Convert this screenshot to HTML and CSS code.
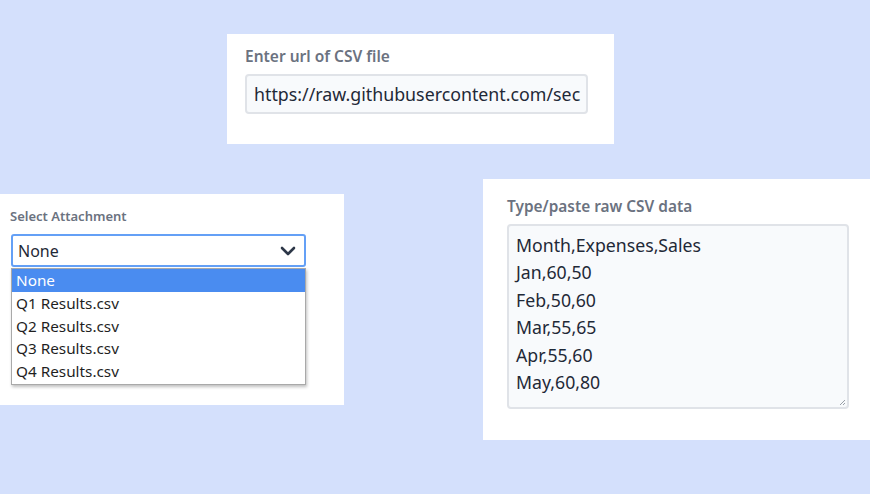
FILE: index.html
```html
<!DOCTYPE html>
<html lang="en">
<head>
<meta charset="utf-8">
<title>CSV sources</title>
<link rel="stylesheet" href="styles.css">
</head>
<body>
<main class="canvas">
  <section class="card card-url">
    <label class="label label-url" for="url">Enter url of CSV file</label>
    <div class="input" id="url">https://raw.githubusercontent.com/sec</div>
  </section>

  <section class="card card-attach">
    <label class="label label-attach">Select Attachment</label>
    <div class="select-wrap">
      <div class="select">
        <span>None</span>
        <svg class="chev" width="16" height="10" viewBox="0 0 16 10" aria-hidden="true">
          <path d="M2 2 L8 8 L14 2" fill="none" stroke="#2d3748" stroke-width="2.6" stroke-linecap="round" stroke-linejoin="round"/>
        </svg>
      </div>
      <ul class="options">
        <li class="opt selected">None</li>
        <li class="opt">Q1 Results.csv</li>
        <li class="opt">Q2 Results.csv</li>
        <li class="opt">Q3 Results.csv</li>
        <li class="opt">Q4 Results.csv</li>
      </ul>
    </div>
  </section>

  <section class="card card-raw">
    <label class="label label-raw">Type/paste raw CSV data</label>
    <div class="textarea">
      <div>Month,Expenses,Sales</div>
      <div>Jan,60,50</div>
      <div>Feb,50,60</div>
      <div>Mar,55,65</div>
      <div>Apr,55,60</div>
      <div>May,60,80</div>
      <svg class="grip" width="7" height="7" viewBox="0 0 7 7" aria-hidden="true">
        <path d="M6 1 L1 6 M6 4 L4 6" stroke="#9aa0a8" stroke-width="1"/>
      </svg>
    </div>
  </section>
</main>
</body>
</html>
```

FILE: styles.css
```css
* { box-sizing: border-box; }
html, body { margin: 0; padding: 0; }
body {
  background: #d4e0fc;
  font-family: "Noto Sans", "Open Sans", "Liberation Sans", sans-serif;
  color: #1f2937;
}
.canvas {
  position: relative;
  width: 870px;
  height: 494px;
  overflow: hidden;
}
.card {
  position: absolute;
  background: #ffffff;
  display: flex;
  flex-direction: column;
}
.label {
  display: block;
  color: #6b7280;
  font-weight: 600;
}
.card-url {
  left: 227px; top: 34px; width: 387px; height: 110px;
  padding: 12px 18px 0;
}
.label-url { font-size: 15.5px; line-height: 21px; margin-bottom: 7px; }
.input {
  width: 343px;
  height: 40px;
  border: 2px solid #e0e3e8;
  border-radius: 4px;
  background: #f8fafc;
  font-size: 17.8px;
  line-height: 36px;
  padding: 0 7px;
  white-space: nowrap;
  overflow: hidden;
  color: #1f2937;
}

.card-attach {
  left: 0; top: 194px; width: 344px; height: 211px;
  padding: 12px 10px 0 11px;
}
.label-attach { font-size: 13px; line-height: 20px; margin-bottom: 8px; margin-left: -1px; }
.select-wrap { position: relative; width: 295px; }
.select {
  height: 33px;
  border: 2px solid #64a0f6;
  border-radius: 3px;
  display: flex;
  align-items: center;
  justify-content: space-between;
  padding: 0 8px 0 5px;
  font-size: 16px;
  color: #1f2937;
}
.chev { display: block; }
.options {
  position: absolute;
  left: 0; top: 34px;
  width: 295px;
  margin: 0; padding: 0 0 1px;
  list-style: none;
  background: #fff;
  border: 1px solid #a9a9a9;
  box-shadow: 1px 2px 3px rgba(0,0,0,0.25);
}
.opt {
  font-size: 15.3px;
  line-height: 22.8px;
  padding: 0 4px;
  color: #1f1f1f;
}
.opt.selected { background: #4a8cf0; color: #fff; }

.card-raw {
  left: 483px; top: 179px; width: 387px; height: 261px;
  padding: 17px 21px 0 24px;
}
.label-raw { font-size: 15.4px; line-height: 21px; margin-bottom: 7px; }
.textarea {
  position: relative;
  width: 342px;
  height: 185px;
  border: 2px solid #e0e3e8;
  border-radius: 4px;
  background: #f8fafc;
  font-size: 17.7px;
  line-height: 27.4px;
  padding: 6px 7px;
  color: #1f2937;
}
.grip { position: absolute; right: 1px; bottom: 1px; }
```
